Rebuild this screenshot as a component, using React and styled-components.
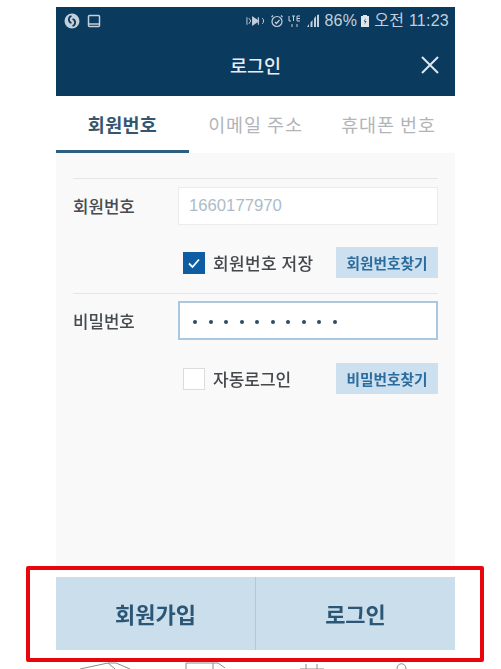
import React from "react";
import styled, { createGlobalStyle } from "styled-components";

const Global = createGlobalStyle`
  html, body { margin: 0; padding: 0; background: #fff; }
  body { width: 501px; height: 669px; overflow: hidden; font-family: "Noto Sans CJK KR", "Liberation Sans", sans-serif; }
`;
const Page = styled.div`
  width: 458px;
  margin-left: 26px;
  padding-top: 7px;
  filter: blur(0.55px);
`;
const Phone = styled.div`
  margin: 0 29px 0 30px;
`;
const Navy = styled.header`
  background: #0b3a5f;
  height: 89px;
  color: #fff;
`;
const StatusBar = styled.div`
  height: 27px;
  display: flex;
  align-items: center;
  justify-content: space-between;
  padding: 0 6px 0 7px;
  color: #c3d0da;
`;
const StatusGroup = styled.div`
  display: flex;
  align-items: center;
  gap: ${(p) => p.$gap}px;
`;
const StatusText = styled.span`
  font-family: "Liberation Sans", "Noto Sans CJK KR", sans-serif;
  font-size: 16px;
  line-height: 18px;
  letter-spacing: 0.25px;
  white-space: nowrap;
`;
const TitleBar = styled.div`
  height: 62px;
  position: relative;
  display: flex;
  align-items: center;
  justify-content: center;
  box-sizing: border-box;
`;
const Title = styled.h1`
  margin: 0;
  font-size: 18.5px;
  font-weight: 500;
  line-height: 24px;
  color: #e8eef3;
`;
const Close = styled.button`
  position: absolute;
  right: 15px;
  top: 21px;
  width: 20px;
  height: 20px;
  padding: 0;
  border: 0;
  background: none;
  color: #dfe7ed;
  display: block;
`;
const Tabs = styled.nav`
  height: 57px;
  display: flex;
  background: #fff;
  box-sizing: border-box;
`;
const Tab = styled.div`
  flex: 0 0 ${(p) => p.$w}px;
  display: flex;
  align-items: center;
  justify-content: center;
  box-sizing: border-box;
  padding-top: 1px;
  font-size: 18.5px;
  font-weight: ${(p) => (p.$active ? 600 : 400)};
  color: ${(p) => (p.$active ? "#34566f" : "#b2b5b8")};
  border-bottom: 3px solid ${(p) => (p.$active ? "#2f5f80" : "transparent")};
  letter-spacing: ${(p) => (p.$active ? "0.3px" : "0.9px")};
  white-space: nowrap;
`;
const Body = styled.main`
  height: 413px;
  background: #f9f9f9;
  padding: 25px 17px 0 17px;
  box-sizing: border-box;
`;
const Row = styled.section`
  border-top: 1px solid #e6e6e6;
  padding-top: 7px;
  height: 115px;
  box-sizing: border-box;
`;
const FieldLine = styled.div`
  display: flex;
  align-items: center;
  height: 39px;
`;
const Label = styled.label`
  width: 105px;
  font-size: 16.8px;
  font-weight: 500;
  color: #464b50;
`;
const Input = styled.div`
  flex: 1;
  height: ${(p) => (p.$focus ? 39 : 38)}px;
  box-sizing: border-box;
  background: #fff;
  border: ${(p) => (p.$focus ? "2px solid #a9c8df" : "1px solid #ececec")};
  padding-left: ${(p) => (p.$focus ? 13 : 10)}px;
  display: flex;
  align-items: center;
  font-family: "Liberation Sans", sans-serif;
  font-size: 16.7px;
  color: #adbcc8;
`;
const Dots = styled.div`
  display: flex;
  gap: 11.5px;
  padding-top: 2px;
`;
const Dot = styled.i`
  display: block;
  width: 4px;
  height: 4px;
  border-radius: 50%;
  background: #2f4a63;
`;
const OptionLine = styled.div`
  display: flex;
  align-items: center;
  height: 31px;
  margin-top: ${(p) => p.$top}px;
  padding-left: 110px;
`;
const Box = styled.span`
  width: 22px;
  height: 22px;
  box-sizing: border-box;
  display: flex;
  align-items: center;
  justify-content: center;
  background: ${(p) => (p.$on ? "#0e5da3" : "#fff")};
  border: 1px solid ${(p) => (p.$on ? "#0e5da3" : "#dcdcdc")};
  color: #fff;
  margin-right: 8px;
`;
const OptionText = styled.span`
  font-size: 17px;
  font-weight: 500;
  color: #45494d;
  letter-spacing: ${(p) => p.$spacing || 0}px;
  white-space: nowrap;
`;
const Find = styled.button`
  margin-left: auto;
  width: 102px;
  height: 31px;
  border: 0;
  padding: 0;
  background: #cde0ef;
  color: #2b6c9e;
  font-family: inherit;
  font-size: 14.7px;
  font-weight: 600;
  white-space: nowrap;
`;
const Frame = styled.div`
  height: 96px;
  box-sizing: border-box;
  border: 4px solid #e8060c;
  border-radius: 2px;
  padding: 7px 25px 8px 26px;
  background: #fff;
`;
const Actions = styled.div`
  height: 73px;
  display: flex;
  background: #cadeec;
`;
const Action = styled.button`
  flex: 1;
  border: 0;
  padding: 0 0 2px;
  background: none;
  font-family: inherit;
  font-size: 22px;
  font-weight: 600;
  color: #2c5676;
  & + & { border-left: 1px solid #b4c9d8; }
`;
const Sketch = styled.svg`
  display: block;
  width: 501px;
  height: 7px;
  margin-left: -26px;
`;

export default function App() {
  return (
    <>
      <Global />
      <Page>
        <Phone>
          <Navy>
            <StatusBar>
              <StatusGroup $gap={6}>
                <svg width="18" height="16" viewBox="0 0 18 16">
                  <circle cx="9" cy="8" r="7.500" fill="#c3d0da" />
                  <path d="M8.500 3c-3.500 1-3.500 6 0 7M9.500 13c3.500-1 3.500-6 0-7" stroke="#0b3a5f" strokeWidth="1.800" fill="none" />
                </svg>
                <svg width="14" height="14" viewBox="0 0 14 14" fill="none" stroke="#c3d0da" strokeWidth="1.500">
                  <rect x="1.500" y="1.500" width="11" height="11" rx="1" />
                  <path d="M2 10h10" />
                </svg>
              </StatusGroup>
              <StatusGroup $gap={4}>
                <svg width="20" height="14" viewBox="0 0 21 14" fill="none" stroke="#c3d0da">
                  <path d="M1 3v8M3 4l2 3-2 3" strokeWidth="1" />
                  <path d="M7 3l6 4-6 4zM13 3v8" fill="#c3d0da" strokeWidth="1.200" />
                  <path d="M17 4c2 1 2 5 0 6" strokeWidth="1" />
                </svg>
                <svg width="14" height="14" viewBox="0 0 14 14" fill="none" stroke="#c3d0da" strokeWidth="1.200">
                  <circle cx="7" cy="7.500" r="5" />
                  <path d="M5 8l1.500 1.500L9.500 6M1.500 3L3 1.500M12.500 3L11 1.500" />
                </svg>
                <svg width="14" height="14" viewBox="0 0 14 14" fill="none" stroke="#c3d0da" strokeWidth="1">
                  <path d="M1 2v5h2M4 2h3M5.500 2v5M9 2h3M9 4.500h3M9 7h3M9 2v5M4 10v3M9 10v3" />
                </svg>
                <svg width="14" height="14" viewBox="0 0 14 14" fill="#c3d0da">
                  <path d="M1 13l2-3v3zM4.500 13V8.500L6.500 6v7zM8 13V4.500L10 2v11zM11 13V1l2-.5V13z" />
                </svg>
                <StatusText>86%</StatusText>
                <svg width="10" height="14" viewBox="0 0 10 14" style={{ marginLeft: -1 }}>
                  <path d="M3 1h4v1h2v11H1V2h2z" fill="#dfe6eb" />
                  <path d="M5.800 4L3.800 7.500h1.600L4.200 11l2.400-4H5z" fill="#0b3a5f" />
                </svg>
                <StatusText>오전 11:23</StatusText>
              </StatusGroup>
            </StatusBar>
            <TitleBar>
              <Title>로그인</Title>
              <Close aria-label="닫기">
                <svg width="20" height="20" viewBox="0 0 20 20" fill="none" stroke="currentColor" strokeWidth="2">
                  <path d="M2 2l16 16M18 2L2 18" />
                </svg>
              </Close>
            </TitleBar>
          </Navy>
          <Tabs>
            <Tab $w={133} $active>회원번호</Tab>
            <Tab $w={133}>이메일 주소</Tab>
            <Tab $w={133}>휴대폰 번호</Tab>
          </Tabs>
          <Body>
            <Row>
              <FieldLine>
                <Label>회원번호</Label>
                <Input>1660177970</Input>
              </FieldLine>
              <OptionLine $top={22}>
                <Box $on>
                  <svg width="14" height="14" viewBox="0 0 14 14" fill="none" stroke="currentColor" strokeWidth="1.800">
                    <path d="M2 7.500l3.500 3.500L12 3.500" />
                  </svg>
                </Box>
                <OptionText $spacing={0.4}>회원번호 저장</OptionText>
                <Find>회원번호찾기</Find>
              </OptionLine>
            </Row>
            <Row>
              <FieldLine>
                <Label>비밀번호</Label>
                <Input $focus>
                  <Dots>
                    {Array.from({ length: 10 }, (_, i) => <Dot key={i} />)}
                  </Dots>
                </Input>
              </FieldLine>
              <OptionLine $top={23}>
                <Box />
                <OptionText>자동로그인</OptionText>
                <Find>비밀번호찾기</Find>
              </OptionLine>
            </Row>
          </Body>
        </Phone>
        <Frame>
          <Actions>
            <Action>회원가입</Action>
            <Action>로그인</Action>
          </Actions>
        </Frame>
        <Sketch viewBox="0 0 501 7" fill="none" stroke="#8c8c8c" strokeWidth="1">
          <path d="M80 7L108 1h8l14 6M108 1l7 6" />
          <path d="M186 7V1h32l7 5M213 1v6" />
          <path d="M300 7h24M306 7V2M317 7V2" />
          <path d="M397 7c0-7 9-7 9 0" />
        </Sketch>
      </Page>
    </>
  );
}
